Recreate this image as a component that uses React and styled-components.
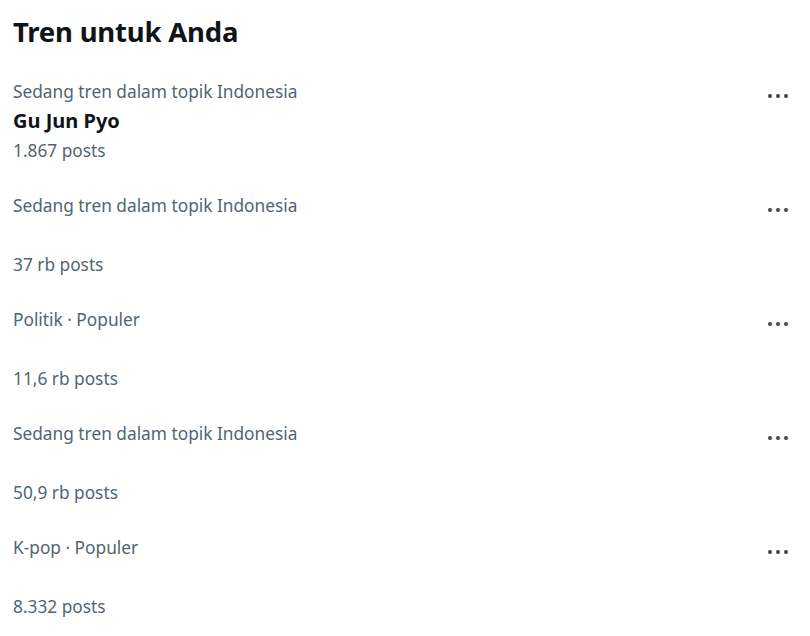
import React from "react";
import styled, { createGlobalStyle } from "styled-components";

const Global = createGlobalStyle`
  html, body { margin: 0; padding: 0; background: #ffffff; }
  body { font-family: "Noto Sans", "Open Sans", Arial, sans-serif; }
`;

const Panel = styled.div`
  width: 810px;
  box-sizing: border-box;
`;

const Header = styled.h2`
  margin: 0;
  padding: 14px 13px 13px;
  font-size: 27.5px;
  line-height: 36px;
  font-weight: 700;
  color: #0f1419;
  letter-spacing: -0.2px;
`;

const Row = styled.div`
  display: flex;
  justify-content: space-between;
  align-items: flex-start;
  padding: 14px 13px 12px;
`;

const Info = styled.div`
  display: flex;
  flex-direction: column;
`;

const Meta = styled.div`
  font-size: 17.3px;
  line-height: 29px;
  height: 29px;
  color: #536471;
`;

const Title = styled.div`
  font-size: 20px;
  line-height: 29px;
  height: 30px;
  font-weight: 700;
  color: #0f1419;
`;

const More = styled.div`
  display: flex;
  gap: 4px;
  padding: 17px 9px 0 0;
`;

const Dot = styled.span`
  width: 4px;
  height: 4px;
  border-radius: 50%;
  background: #3d4750;
`;

const trends = [
  { cat: "Sedang tren dalam topik Indonesia", title: "Gu Jun Pyo", posts: "1.867 posts" },
  { cat: "Sedang tren dalam topik Indonesia", title: "", posts: "37 rb posts" },
  { cat: "Politik · Populer", title: "", posts: "11,6 rb posts" },
  { cat: "Sedang tren dalam topik Indonesia", title: "", posts: "50,9 rb posts" },
  { cat: "K-pop · Populer", title: "", posts: "8.332 posts" },
];

export default function App() {
  return (
    <>
      <Global />
      <Panel>
        <Header>Tren untuk Anda</Header>
        {trends.map((t, i) => (
          <Row key={i}>
            <Info>
              <Meta>{t.cat}</Meta>
              <Title>{t.title}</Title>
              <Meta>{t.posts}</Meta>
            </Info>
            <More>
              <Dot />
              <Dot />
              <Dot />
            </More>
          </Row>
        ))}
      </Panel>
    </>
  );
}
